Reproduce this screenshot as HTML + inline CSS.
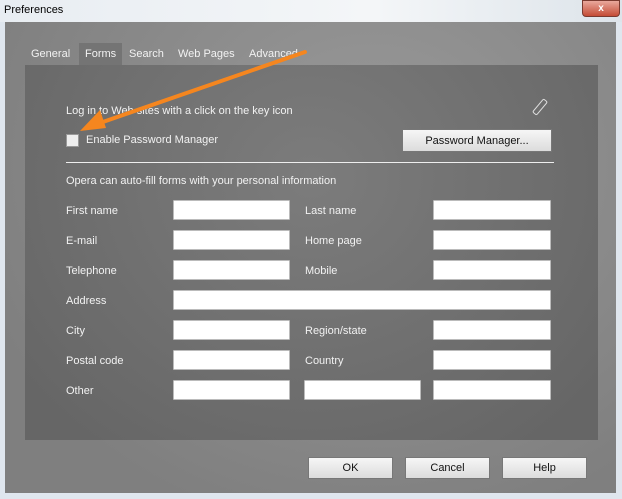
<!DOCTYPE html><html><head><style>
body{margin:0;width:622px;height:499px;overflow:hidden;background:#dfe6ee;font-family:"Liberation Sans",sans-serif;position:relative}
.a{position:absolute}
.t{color:#f2f2f2;font-size:11px}
.in{position:absolute;background:#fff;border:1px solid #bbb;height:20px;box-sizing:border-box;border-radius:1px}
.btn{position:absolute;background:linear-gradient(#f6f6f6,#dcdcdc);border:1px solid #777;box-sizing:border-box;font-size:11px;color:#111;text-align:center;line-height:20px}
</style></head><body>
<div class="a" style="left:0;top:0;width:622px;height:22px;background:linear-gradient(90deg,#e8edf2,#f4f6f8 60%,#dde4ea)"></div>
<div class="a" style="left:4px;top:4px;font-size:11px;color:#000">Preferences</div>
<div class="a" style="left:582px;top:0;width:38px;height:17px;background:linear-gradient(#e9a89c,#c44c36);border:1px solid #7a3a30;border-radius:0 0 4px 4px;box-sizing:border-box;color:#fff;font-size:10px;text-align:center;line-height:15px;font-weight:bold">x</div>
<div class="a" style="left:5px;top:22px;width:611px;height:471px;background:radial-gradient(ellipse at 60% 30%,#9a9a9a,#7f7f7f 80%)"></div>
<div class="a" style="left:79px;top:43px;width:43px;height:22px;background:#747474"></div>
<div class="a t" style="left:31px;top:48px">General</div>
<div class="a t" style="left:85px;top:48px">Forms</div>
<div class="a t" style="left:129px;top:48px">Search</div>
<div class="a t" style="left:178px;top:48px">Web Pages</div>
<div class="a t" style="left:249px;top:48px">Advanced</div>
<div class="a" style="left:25px;top:65px;width:573px;height:375px;background:radial-gradient(ellipse at 50% 30%,#7c7c7c,#666 90%)"></div>
<div class="a t" style="left:66px;top:105px">Log in to Web sites with a click on the key icon</div>
<div class="a" style="left:531px;top:104px;width:16px;height:4px;border:1px solid #ddd;transform:rotate(-50deg);border-radius:2px"></div>
<div class="a" style="left:66px;top:134px;width:11px;height:11px;background:#eee;border:1px solid #999"></div>
<div class="a t" style="left:86px;top:134px">Enable Password Manager</div>
<div class="btn" style="left:402px;top:129px;width:150px;height:23px;line-height:22px">Password Manager...</div>
<div class="a" style="left:66px;top:162px;width:488px;height:1px;background:#eee"></div>
<div class="a t" style="left:66px;top:175px">Opera can auto-fill forms with your personal information</div>
<div class="a t" style="left:66px;top:205px">First name</div><div class="in" style="left:173px;top:200px;width:117px"></div>
<div class="a t" style="left:305px;top:205px">Last name</div><div class="in" style="left:433px;top:200px;width:118px"></div>
<div class="a t" style="left:66px;top:235px">E-mail</div><div class="in" style="left:173px;top:230px;width:117px"></div>
<div class="a t" style="left:305px;top:235px">Home page</div><div class="in" style="left:433px;top:230px;width:118px"></div>
<div class="a t" style="left:66px;top:265px">Telephone</div><div class="in" style="left:173px;top:260px;width:117px"></div>
<div class="a t" style="left:305px;top:265px">Mobile</div><div class="in" style="left:433px;top:260px;width:118px"></div>
<div class="a t" style="left:66px;top:295px">Address</div><div class="in" style="left:173px;top:290px;width:378px"></div>
<div class="a t" style="left:66px;top:325px">City</div><div class="in" style="left:173px;top:320px;width:117px"></div>
<div class="a t" style="left:305px;top:325px">Region/state</div><div class="in" style="left:433px;top:320px;width:118px"></div>
<div class="a t" style="left:66px;top:355px">Postal code</div><div class="in" style="left:173px;top:350px;width:117px"></div>
<div class="a t" style="left:305px;top:355px">Country</div><div class="in" style="left:433px;top:350px;width:118px"></div>
<div class="a t" style="left:66px;top:385px">Other</div><div class="in" style="left:173px;top:380px;width:117px"></div>
<div class="in" style="left:304px;top:380px;width:117px"></div><div class="in" style="left:433px;top:380px;width:118px"></div>
<div class="btn" style="left:308px;top:457px;width:85px;height:22px">OK</div>
<div class="btn" style="left:405px;top:457px;width:85px;height:22px">Cancel</div>
<div class="btn" style="left:502px;top:457px;width:85px;height:22px">Help</div>
<svg class="a" style="left:0;top:0" width="622" height="499"><line x1="305" y1="52" x2="100" y2="123" stroke="#f5861f" stroke-width="4" stroke-linecap="round"/><polygon points="80,131 100,110 106,128" fill="#f5861f"/></svg>
</body></html>
